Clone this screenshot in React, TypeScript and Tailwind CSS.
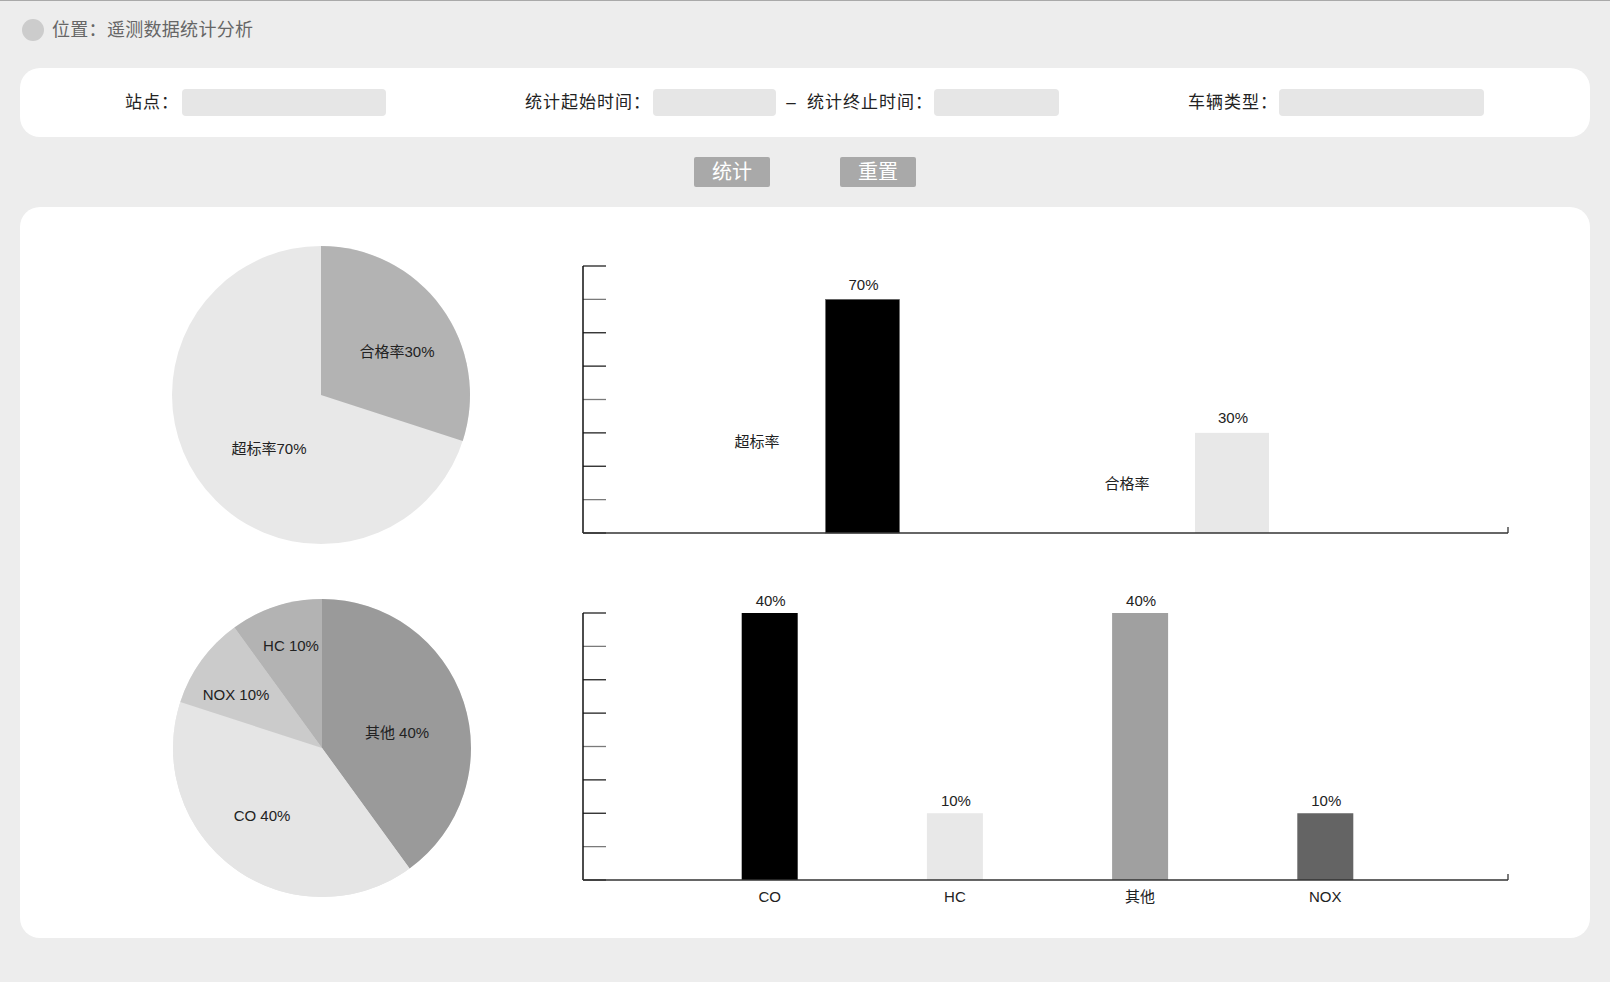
import React from "react";

const FONT = "font-['Liberation_Sans','Noto_Sans_CJK_SC',sans-serif]";

type Slice = { d: string; fill: string };
type PieLabel = { x: number; y: number; text: string };

// pie slices drawn clockwise from 12 o'clock, r=149 around (150,150)
const passPie: Slice[] = [
  { d: "M150,150 L150,1 A149,149 0 0 1 291.71,196.04 Z", fill: "#b3b3b3" },
];
const passLabels: PieLabel[] = [
  { x: 226, y: 106, text: "合格率30%" },
  { x: 98, y: 203, text: "超标率70%" },
];

const gasPie: Slice[] = [
  { d: "M150,150 L150,1 A149,149 0 0 1 237.58,270.54 Z", fill: "#9a9a9a" },
  { d: "M150,150 L237.58,270.54 A149,149 0 0 1 8.29,103.96 Z", fill: "#e5e5e5" },
  { d: "M150,150 L8.29,103.96 A149,149 0 0 1 62.42,29.46 Z", fill: "#cbcbcb" },
  { d: "M150,150 L62.42,29.46 A149,149 0 0 1 150,1 Z", fill: "#b3b3b3" },
];
const gasLabels: PieLabel[] = [
  { x: 119, y: 47, text: "HC 10%" },
  { x: 64, y: 96, text: "NOX 10%" },
  { x: 225, y: 134, text: "其他 40%" },
  { x: 90, y: 217, text: "CO 40%" },
];

function Pie({ slices, labels, base }: { slices: Slice[]; labels: PieLabel[]; base: string }) {
  return (
    <svg width={300} height={300} viewBox="0 0 300 300">
      <circle cx={150} cy={150} r={149} fill={base} />
      {slices.map((s) => (
        <path key={s.d} d={s.d} fill={s.fill} />
      ))}
      {labels.map((l) => (
        <text
          key={l.text}
          x={l.x}
          y={l.y}
          textAnchor="middle"
          dominantBaseline="central"
          fontSize={15}
          fill="#222"
        >
          {l.text}
        </text>
      ))}
    </svg>
  );
}

function Axis({ top, bottom }: { top: number; bottom: number }) {
  const step = (bottom - top) / 8;
  return (
    <g>
      {Array.from({ length: 9 }).map((_, i) => (
        <line
          key={i}
          x1={10}
          x2={33}
          y1={top + step * i}
          y2={top + step * i}
          stroke={i % 3 === 1 ? "#7a7a7a" : "#222"}
          strokeWidth={1.3}
        />
      ))}
      <line x1={10} x2={10} y1={top} y2={bottom} stroke="#111" strokeWidth={1.5} />
      <line x1={10} x2={935} y1={bottom} y2={bottom} stroke="#333" strokeWidth={1.5} />
      <line x1={935} x2={935} y1={bottom - 6} y2={bottom} stroke="#333" strokeWidth={1.3} />
    </g>
  );
}

function RateBars() {
  const bottom = 288;
  const unit = (288 - 21) / 80;
  const bars = [
    { x: 252.5, pct: 70, fill: "#000", label: "超标率", lx: 184, ly: 196.5 },
    { x: 622, pct: 30, fill: "#e8e8e8", label: "合格率", lx: 554, ly: 238.5 },
  ];
  return (
    <svg width={950} height={300} viewBox="0 0 950 300">
      {bars.map((b) => (
        <g key={b.label}>
          <rect
            x={b.x}
            y={bottom - b.pct * unit}
            width={74}
            height={b.pct * unit}
            fill={b.fill}
            stroke={b.pct === 70 ? "#666" : "none"}
            strokeWidth={0.6}
          />
          <text
            x={b.x + 38}
            y={bottom - b.pct * unit - 15}
            textAnchor="middle"
            dominantBaseline="central"
            fontSize={15}
            fill="#222"
          >
            {b.pct}%
          </text>
          <text x={b.lx} y={b.ly} textAnchor="middle" dominantBaseline="central" fontSize={15} fill="#222">
            {b.label}
          </text>
        </g>
      ))}
      <Axis top={21} bottom={bottom} />
    </svg>
  );
}

function GasBars() {
  const top = 35;
  const bottom = 302;
  const unit = (bottom - top) / 40;
  const bars = [
    { name: "CO", pct: 40, fill: "#000" },
    { name: "HC", pct: 10, fill: "#e8e8e8" },
    { name: "其他", pct: 40, fill: "#a0a0a0" },
    { name: "NOX", pct: 10, fill: "#646464" },
  ];
  return (
    <svg width={950} height={335} viewBox="0 0 950 335">
      {bars.map((b, i) => {
        const cx = 11.5 + 185.2 * (i + 1);
        const h = b.pct * unit;
        return (
          <g key={b.name}>
            <rect x={cx - 28} y={bottom - h} width={56} height={h} fill={b.fill} />
            <text
              x={cx + 1}
              y={bottom - h - 13}
              textAnchor="middle"
              dominantBaseline="central"
              fontSize={15}
              fill="#222"
            >
              {b.pct}%
            </text>
            <text x={cx} y={318} textAnchor="middle" dominantBaseline="central" fontSize={15} fill="#222">
              {b.name}
            </text>
          </g>
        );
      })}
      <Axis top={top} bottom={bottom} />
    </svg>
  );
}

export default function App() {
  return (
    <div className={`${FONT} min-h-[982px] w-[1610px] border-t border-[#a9a9a9] bg-[#ededed]`}>
      {/* Breadcrumb */}
      <div className="flex h-[58px] items-center pl-[22px]">
        <span className="h-[22px] w-[22px] rounded-full bg-[#cccccc]" />
        <span className="ml-[8px] text-[18px] tracking-[0.3px] text-[#666]">位置：遥测数据统计分析</span>
      </div>

      {/* Filters */}
      <div className="mx-[20px] mt-[9px] flex h-[69px] items-center rounded-[20px] bg-white pl-[105px] text-[17px] tracking-[1px] text-[#222]">
        <span className="w-[57px]">站点：</span>
        <div className="h-[27px] w-[204px] rounded-[4px] bg-[#e6e6e6]" />
        <span className="ml-[139px] w-[128px]">统计起始时间：</span>
        <div className="h-[27px] w-[123px] rounded-[4px] bg-[#e6e6e6]" />
        <span className="w-[31px] text-center">–</span>
        <span className="w-[127px]">统计终止时间：</span>
        <div className="h-[27px] w-[125px] rounded-[4px] bg-[#e6e6e6]" />
        <span className="ml-[129px] w-[91px]">车辆类型：</span>
        <div className="h-[27px] w-[205px] rounded-[4px] bg-[#e6e6e6]" />
      </div>

      {/* Actions */}
      <div className="mt-[20px] flex justify-center gap-[70px]">
        <button type="button" className="h-[30px] w-[76px] rounded-[2px] bg-[#a9a9a9] text-[20px] text-white">
          统计
        </button>
        <button type="button" className="h-[30px] w-[76px] rounded-[2px] bg-[#a9a9a9] text-[20px] text-white">
          重置
        </button>
      </div>

      {/* Charts */}
      <div className="mx-[20px] mt-[20px] rounded-[20px] bg-white pb-[25px] pt-[38px]">
        <div className="flex items-start">
          <div className="ml-[151px]">
            <Pie slices={passPie} labels={passLabels} base="#e8e8e8" />
          </div>
          <div className="ml-[102px]">
            <RateBars />
          </div>
        </div>
        <div className="mt-[33px] flex items-start">
          <div className="ml-[152px] mt-[20px]">
            <Pie slices={gasPie} labels={gasLabels} base="#e5e5e5" />
          </div>
          <div className="ml-[101px]">
            <GasBars />
          </div>
        </div>
      </div>
    </div>
  );
}
